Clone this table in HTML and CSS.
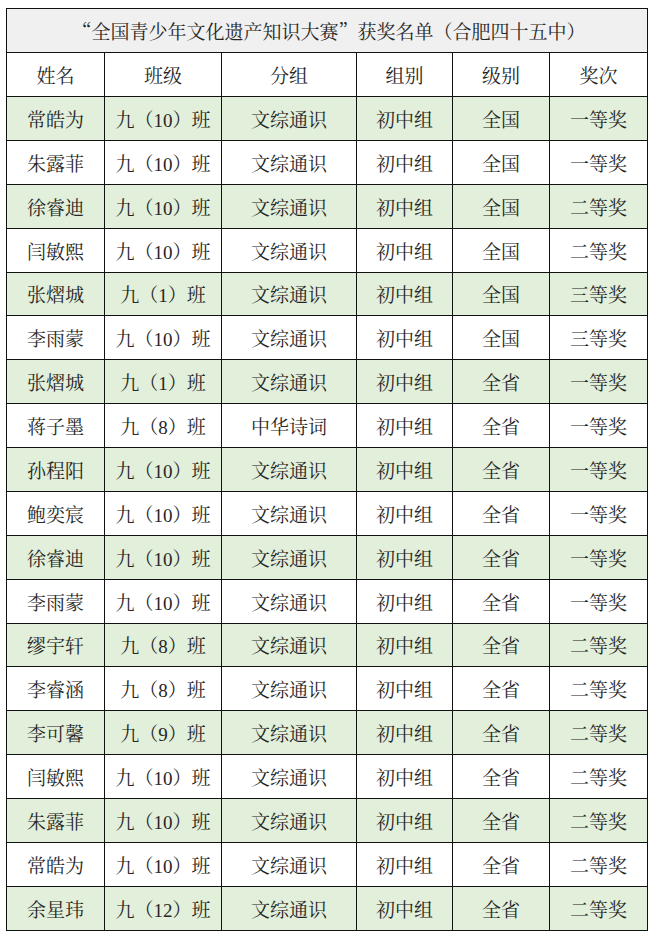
FILE: index.html
```html
<!DOCTYPE html>
<html lang="zh-CN">
<head>
<meta charset="utf-8">
<title>获奖名单</title>
<link rel="stylesheet" href="styles.css">
</head>
<body>
<table class="award">
<colgroup>
<col class="c1"><col class="c2"><col class="c3"><col class="c4"><col class="c5"><col class="c6">
</colgroup>
<tr class="title"><td colspan="6">“全国青少年文化遗产知识大赛”获奖名单（合肥四十五中）</td></tr>
<tr class="head"><td>姓名</td><td>班级</td><td>分组</td><td>组别</td><td>级别</td><td>奖次</td></tr>
<tr class="g"><td>常皓为</td><td>九（10）班</td><td>文综通识</td><td>初中组</td><td>全国</td><td>一等奖</td></tr>
<tr><td>朱露菲</td><td>九（10）班</td><td>文综通识</td><td>初中组</td><td>全国</td><td>一等奖</td></tr>
<tr class="g"><td>徐睿迪</td><td>九（10）班</td><td>文综通识</td><td>初中组</td><td>全国</td><td>二等奖</td></tr>
<tr><td>闫敏熙</td><td>九（10）班</td><td>文综通识</td><td>初中组</td><td>全国</td><td>二等奖</td></tr>
<tr class="g"><td>张熠城</td><td>九（1）班</td><td>文综通识</td><td>初中组</td><td>全国</td><td>三等奖</td></tr>
<tr><td>李雨蒙</td><td>九（10）班</td><td>文综通识</td><td>初中组</td><td>全国</td><td>三等奖</td></tr>
<tr class="g"><td>张熠城</td><td>九（1）班</td><td>文综通识</td><td>初中组</td><td>全省</td><td>一等奖</td></tr>
<tr><td>蒋子墨</td><td>九（8）班</td><td>中华诗词</td><td>初中组</td><td>全省</td><td>一等奖</td></tr>
<tr class="g"><td>孙程阳</td><td>九（10）班</td><td>文综通识</td><td>初中组</td><td>全省</td><td>一等奖</td></tr>
<tr><td>鲍奕宸</td><td>九（10）班</td><td>文综通识</td><td>初中组</td><td>全省</td><td>一等奖</td></tr>
<tr class="g"><td>徐睿迪</td><td>九（10）班</td><td>文综通识</td><td>初中组</td><td>全省</td><td>一等奖</td></tr>
<tr><td>李雨蒙</td><td>九（10）班</td><td>文综通识</td><td>初中组</td><td>全省</td><td>一等奖</td></tr>
<tr class="g"><td>缪宇轩</td><td>九（8）班</td><td>文综通识</td><td>初中组</td><td>全省</td><td>二等奖</td></tr>
<tr><td>李睿涵</td><td>九（8）班</td><td>文综通识</td><td>初中组</td><td>全省</td><td>二等奖</td></tr>
<tr class="g"><td>李可馨</td><td>九（9）班</td><td>文综通识</td><td>初中组</td><td>全省</td><td>二等奖</td></tr>
<tr><td>闫敏熙</td><td>九（10）班</td><td>文综通识</td><td>初中组</td><td>全省</td><td>二等奖</td></tr>
<tr class="g"><td>朱露菲</td><td>九（10）班</td><td>文综通识</td><td>初中组</td><td>全省</td><td>二等奖</td></tr>
<tr><td>常皓为</td><td>九（10）班</td><td>文综通识</td><td>初中组</td><td>全省</td><td>二等奖</td></tr>
<tr class="g"><td>余星玮</td><td>九（12）班</td><td>文综通识</td><td>初中组</td><td>全省</td><td>二等奖</td></tr>
</table>
</body>
</html>
```

FILE: styles.css
```css
html, body {
  margin: 0;
  padding: 0;
  background: #ffffff;
}
body {
  padding: 8px 0 0 6px;
  font-family: "Liberation Serif", "Noto Serif CJK SC", "Noto Sans CJK SC", serif;
  color: #262626;
}
.award {
  border-collapse: collapse;
  table-layout: fixed;
  width: 641px;
  font-size: 19px;
}
.c1 { width: 98px; }
.c2 { width: 117px; }
.c3 { width: 135px; }
.c4 { width: 96px; }
.c5 { width: 97px; }
.c6 { width: 98px; }
.award td {
  border: 1px solid #111;
  height: 42.89px;
  padding: 0;
  text-align: center;
  vertical-align: middle;
  white-space: nowrap;
  overflow: hidden;
}
.award tr.title td,
.award tr.head td {
  height: 43px;
}
.award tr.title td {
  background: #f0f0f0;
  font-family: "Noto Serif CJK SC", "Noto Sans CJK SC", serif;
  padding-left: 4px;
}
.award tr.g td {
  background: #e2efda;
}
```
